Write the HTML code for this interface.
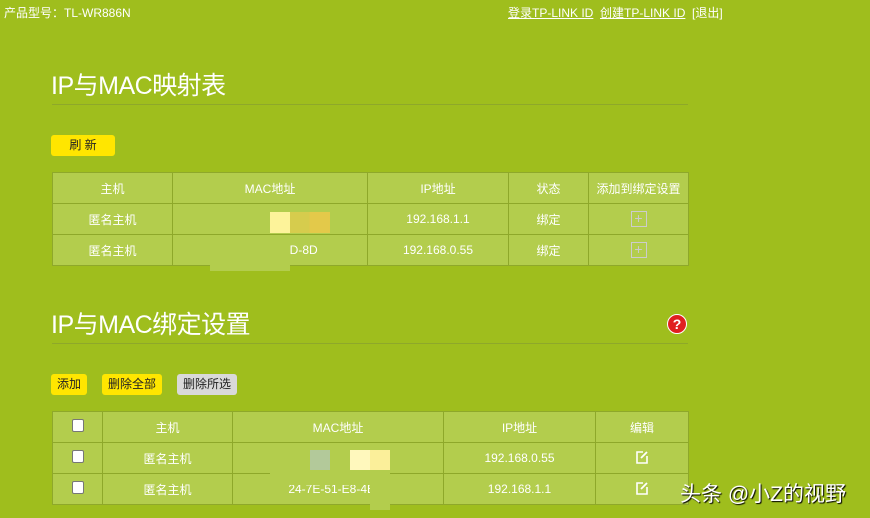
<!DOCTYPE html><html><head><meta charset="utf-8"><style>
body{margin:0;width:870px;height:518px;background:#9fbe1d;font-family:"Liberation Sans","Noto Sans CJK SC",sans-serif;color:#fff;position:relative;overflow:hidden;font-size:12px}
.a{position:absolute}
h1{position:absolute;margin:0;font-weight:normal;font-size:25px;left:51px;letter-spacing:-0.5px}
.hr{position:absolute;left:52px;width:636px;height:1px;background:#8ea82a}
.btn{position:absolute;height:21px;line-height:21px;border-radius:3px;background:#ffe600;color:#222;font-size:12px;text-align:center}
table{position:absolute;left:52px;border-collapse:collapse;background:#b3cd4d}
td{border:1px solid #8ea82a;text-align:center;height:30px;padding:0;font-size:12px}
.cb{display:inline-block;width:10px;height:11px;background:#fff;border:1px solid #777;border-radius:2px}
.plus{display:inline-block;width:14px;height:14px;border:1px solid #ccc;color:#ccc;line-height:13px;font-size:14px;vertical-align:middle}
u{text-decoration:underline}
</style></head><body>
<div class="a" style="left:4px;top:4px;font-size:12px">产品型号：TL-WR886N</div>
<div class="a" style="left:508px;top:4px;font-size:12px"><u>登录TP-LINK ID</u>&nbsp;&nbsp;<u>创建TP-LINK ID</u>&nbsp;&nbsp;[退出]</div>
<h1 style="top:66px">IP与MAC映射表</h1>
<div class="hr" style="top:104px"></div>
<div class="btn" style="left:51px;top:135px;width:64px">刷 新</div>
<table style="top:172px;width:637px">
<tr><td style="width:119px">主机</td><td style="width:194px">MAC地址</td><td style="width:140px">IP地址</td><td style="width:79px">状态</td><td>添加到绑定设置</td></tr>
<tr><td>匿名主机</td><td style="position:relative"><span class="a" style="left:97px;top:8px;width:60px;height:21px;background:linear-gradient(90deg,#fdf39a 0 33%,#d6cc4d 33% 66%,#e3c94a 66%)"></span></td><td>192.168.1.1</td><td>绑定</td><td><span class="plus">+</span></td></tr>
<tr><td>匿名主机</td><td style="position:relative"><span style="margin-left:60px">FD-8D</span></td><td>192.168.0.55</td><td>绑定</td><td><span class="plus">+</span></td></tr>
</table>
<div class="a" style="left:210px;top:235px;width:80px;height:36px;background:#b3cd4d"></div>
<h1 style="top:305px">IP与MAC绑定设置</h1>
<div class="a" style="left:667px;top:314px;width:20px;height:20px;border-radius:50%;background:#e02020;border:1px solid #fff;box-sizing:border-box;color:#fff;font-weight:bold;font-size:14px;line-height:18px;text-align:center">?</div>
<div class="hr" style="top:343px"></div>
<div class="btn" style="left:51px;top:374px;width:36px">添加</div>
<div class="btn" style="left:102px;top:374px;width:60px">删除全部</div>
<div class="btn" style="left:177px;top:374px;width:60px;background:#d9d9d9">删除所选</div>
<table style="top:411px;width:637px">
<tr><td style="width:49px"><span class="cb"></span></td><td style="width:129px">主机</td><td style="width:210px">MAC地址</td><td style="width:151px">IP地址</td><td>编辑</td></tr>
<tr><td><span class="cb"></span></td><td>匿名主机</td><td style="position:relative"><span class="a" style="left:77px;top:7px;width:20px;height:20px;background:#b3c99a"></span><span class="a" style="left:117px;top:7px;width:40px;height:20px;background:linear-gradient(90deg,#fff8bd 0 50%,#fbef9a 50%)"></span></td><td>192.168.0.55</td><td><svg width="14" height="14" viewBox="0 0 14 14"><path d="M8 2H2v11h10V6" fill="none" stroke="#fff" stroke-width="1.6"/><path d="M6 8l6-6" stroke="#fff" stroke-width="1.8"/></svg></td></tr>
<tr><td><span class="cb"></span></td><td>匿名主机</td><td>24-7E-51-E8-4E-D</td><td>192.168.1.1</td><td><svg width="14" height="14" viewBox="0 0 14 14"><path d="M8 2H2v11h10V6" fill="none" stroke="#fff" stroke-width="1.6"/><path d="M6 8l6-6" stroke="#fff" stroke-width="1.8"/></svg></td></tr>
</table>
<div class="a" style="left:270px;top:473px;width:120px;height:12px;background:#b3cd4d"></div>
<div class="a" style="left:370px;top:485px;width:20px;height:25px;background:#b3cd4d"></div>
<div class="a" style="left:680px;top:478px;font-size:21px;color:#fff;text-shadow:1px 1px 1px #000">头条 @小Z的视野</div>
</body></html>
